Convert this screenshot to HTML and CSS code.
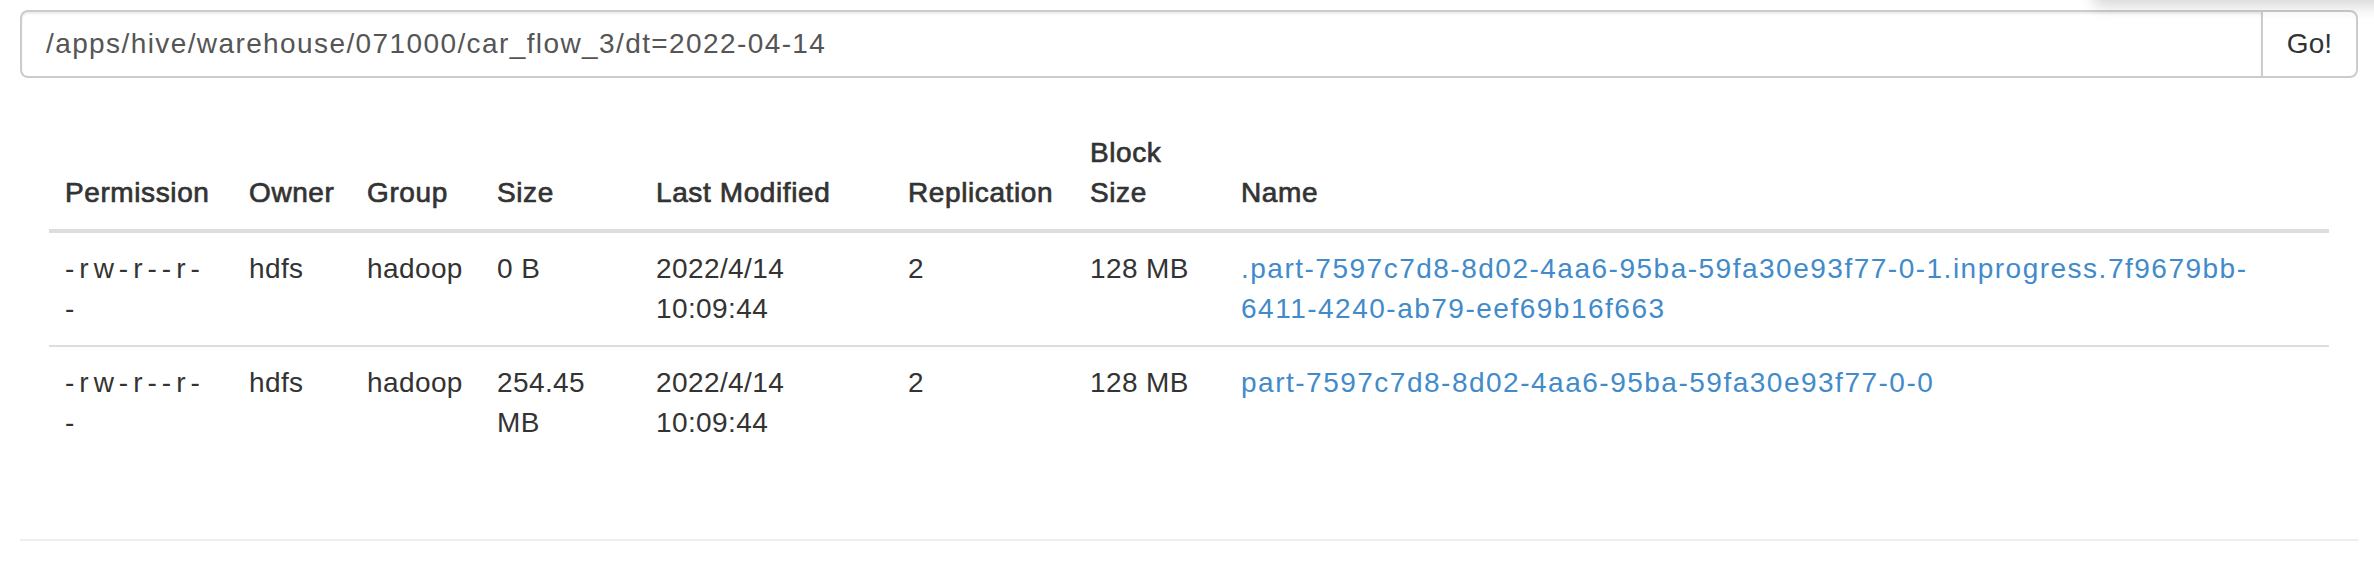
FILE: index.html
```html
<!DOCTYPE html>
<html>
<head>
<meta charset="utf-8">
<title>Browse Directory</title>
<link rel="stylesheet" href="styles.css">
</head>
<body>
<div class="menu-shadow"></div>
<div class="page">
  <form class="input-group">
    <input class="path-input" type="text" value="/apps/hive/warehouse/071000/car_flow_3/dt=2022-04-14">
    <button class="go-btn" type="button">Go!</button>
  </form>

  <table class="listing">
    <colgroup>
      <col class="c-perm"><col class="c-owner"><col class="c-group"><col class="c-size">
      <col class="c-mod"><col class="c-rep"><col class="c-block"><col class="c-name">
    </colgroup>
    <thead>
      <tr>
        <th>Permission</th>
        <th>Owner</th>
        <th>Group</th>
        <th>Size</th>
        <th>Last Modified</th>
        <th>Replication</th>
        <th>Block Size</th>
        <th>Name</th>
      </tr>
    </thead>
    <tbody>
      <tr>
        <td class="perm">-rw-r--r--</td>
        <td>hdfs</td>
        <td>hadoop</td>
        <td>0 B</td>
        <td>2022/4/14 10:09:44</td>
        <td>2</td>
        <td>128 MB</td>
        <td><a class="file-link" href="#">.part-7597c7d8-8d02-4aa6-95ba-59fa30e93f77-0-1.inprogress.7f9679bb-6411-4240-ab79-eef69b16f663</a></td>
      </tr>
      <tr>
        <td class="perm">-rw-r--r--</td>
        <td>hdfs</td>
        <td>hadoop</td>
        <td>254.45 MB</td>
        <td>2022/4/14 10:09:44</td>
        <td>2</td>
        <td>128 MB</td>
        <td><a class="file-link" href="#">part-7597c7d8-8d02-4aa6-95ba-59fa30e93f77-0-0</a></td>
      </tr>
    </tbody>
  </table>

  <hr class="divider">
</div>
</body>
</html>
```

FILE: styles.css
```css
html, body {
  margin: 0;
  padding: 0;
  background: #fff;
}

body {
  font-family: "Liberation Sans", Arial, Helvetica, sans-serif;
  font-size: 28px;
  line-height: 40px;
  color: #333;
  overflow: hidden;
  position: relative;
}

.menu-shadow {
  position: absolute;
  top: -100px;
  right: -20px;
  width: 300px;
  height: 100px;
  background: #fff;
  box-shadow: 0 6px 14px rgba(0, 0, 0, 0.16);
}

.page {
  padding: 10px 16px 0 20px;
}

.input-group {
  display: flex;
  margin: 0;
}

.path-input {
  flex: 1;
  min-width: 0;
  height: 68px;
  box-sizing: border-box;
  padding: 12px 24px;
  font-family: inherit;
  font-size: 28px;
  letter-spacing: 1.4px;
  color: #555;
  border: 2px solid #ccc;
  border-right: none;
  border-radius: 8px 0 0 8px;
  box-shadow: inset 0 2px 2px rgba(0, 0, 0, 0.075);
  outline: none;
  background: #fff;
}

.go-btn {
  height: 68px;
  box-sizing: border-box;
  padding: 12px 24px;
  font-family: inherit;
  font-size: 28px;
  color: #333;
  background: #fff;
  border: 2px solid #ccc;
  border-radius: 0 8px 8px 0;
  cursor: pointer;
}

.listing {
  width: calc(100% - 58px);
  margin: 39px 29px 80px;
  border-collapse: collapse;
  border-spacing: 0;
  table-layout: fixed;
}

.c-perm { width: 184px; }
.c-owner { width: 118px; }
.c-group { width: 130px; }
.c-size { width: 159px; }
.c-mod { width: 252px; }
.c-rep { width: 182px; }
.c-block { width: 151px; }
.c-name { width: auto; }

.listing th,
.listing td {
  padding: 16px;
  text-align: left;
  line-height: 40px;
}

.listing th {
  font-weight: normal;
  -webkit-text-stroke: 0.7px #333;
  letter-spacing: 0.6px;
  vertical-align: bottom;
  border-bottom: 4px solid #ddd;
}

.listing td {
  vertical-align: top;
  border-top: 2px solid #ddd;
  letter-spacing: 0.4px;
}

.listing td.perm {
  letter-spacing: 5px;
}

.file-link {
  color: #428bca;
  text-decoration: none;
  letter-spacing: 1.5px;
}

.divider {
  margin: 0;
  border: 0;
  border-top: 2px solid #eee;
}
```
